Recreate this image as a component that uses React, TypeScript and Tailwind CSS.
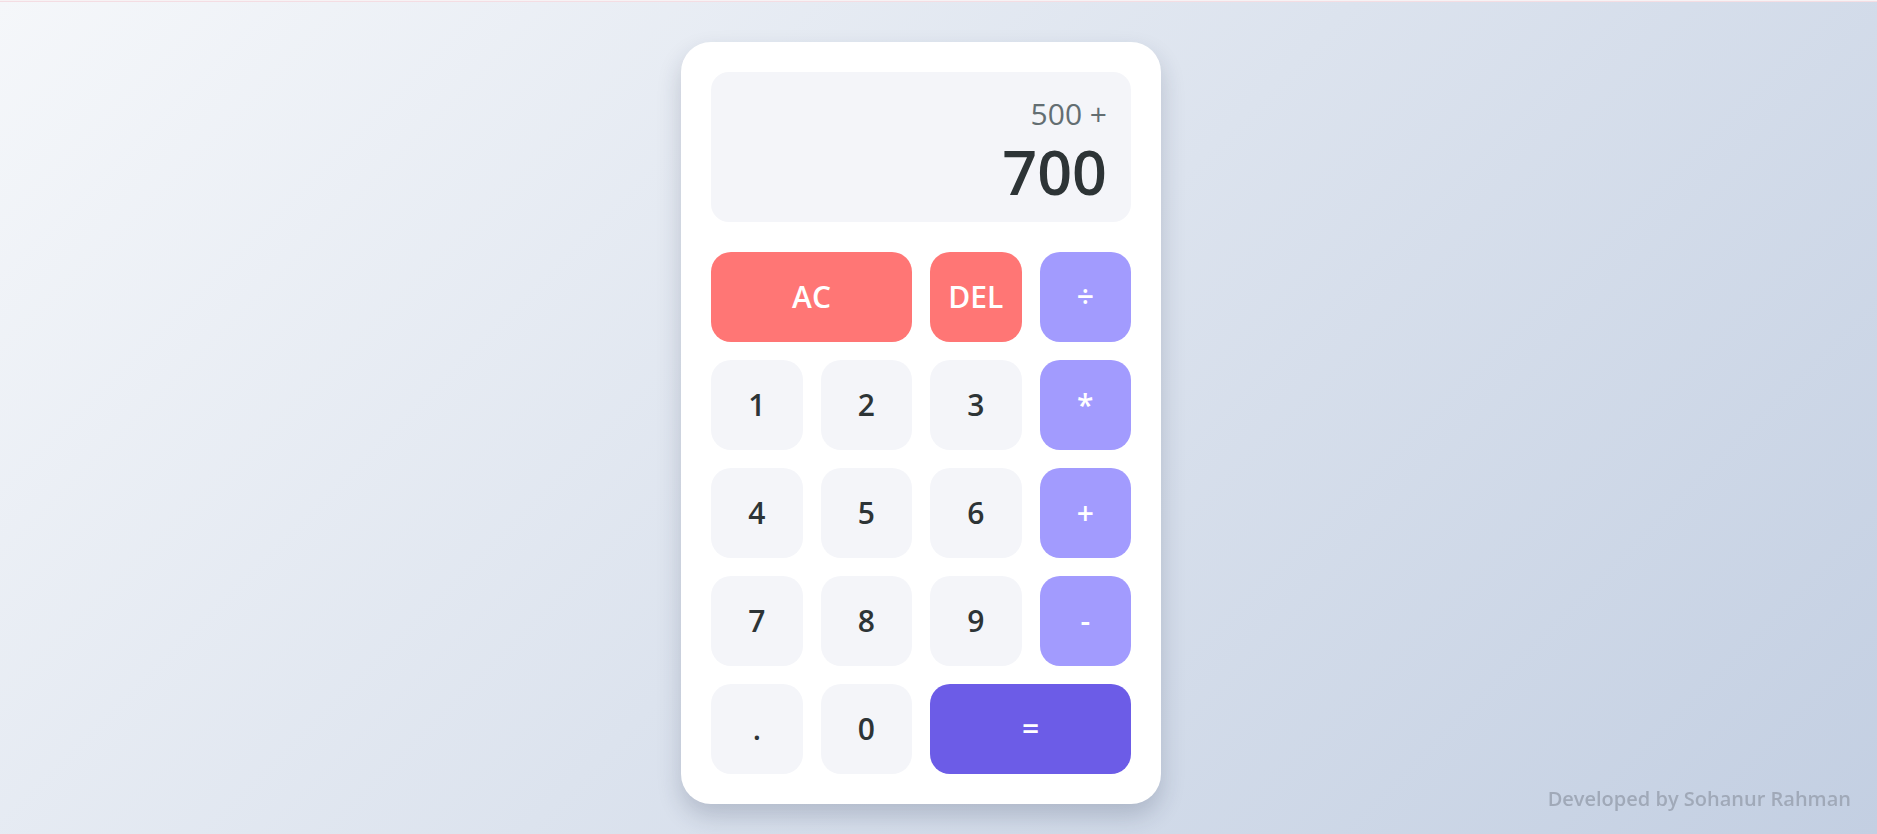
const keys = [
  { label: 'AC', kind: 'clear', wide: true },
  { label: 'DEL', kind: 'clear', wide: false },
  { label: '÷', kind: 'op', wide: false },
  { label: '1', kind: 'num', wide: false },
  { label: '2', kind: 'num', wide: false },
  { label: '3', kind: 'num', wide: false },
  { label: '*', kind: 'op', wide: false },
  { label: '4', kind: 'num', wide: false },
  { label: '5', kind: 'num', wide: false },
  { label: '6', kind: 'num', wide: false },
  { label: '+', kind: 'op', wide: false },
  { label: '7', kind: 'num', wide: false },
  { label: '8', kind: 'num', wide: false },
  { label: '9', kind: 'num', wide: false },
  { label: '-', kind: 'op', wide: false },
  { label: '.', kind: 'num', wide: false },
  { label: '0', kind: 'num', wide: false },
  { label: '=', kind: 'equals', wide: true },
];

const kindClass: Record<string, string> = {
  num: 'bg-[#f4f5f9] text-[#2d3436] font-semibold',
  clear: 'bg-[#ff7675] text-white font-semibold',
  op: 'bg-[#a29bfe] text-white font-semibold',
  equals: 'bg-[#6c5ce7] text-white font-semibold',
};

export default function App() {
  return (
    <div
      className="min-h-screen bg-[linear-gradient(135deg,#f5f7fa_0%,#c3cfe2_100%)]"
      style={{ fontFamily: '"Open Sans", "Noto Sans", sans-serif' }}
    >
      <div className="h-[2px] border-b border-[#f4dde3] bg-[#f7f2f4]" />

      <div className="flex justify-center pt-[40px] pb-[30px]">
        <div className="mr-[35px] w-[480px] rounded-[30px] bg-white p-[30px] shadow-[0_12px_24px_rgba(30,40,70,0.2)]">
          {/* Display */}
          <div className="flex h-[150px] flex-col items-end rounded-[18px] bg-[#f4f5f9] px-[24px] pt-[24px] pb-[14px]">
            <div className="text-[30px] leading-[36px] text-[#636e72]">500 +</div>
            <div className="mt-[4px] text-[61px] leading-[72px] font-semibold text-[#2d3436]">700</div>
          </div>

          {/* Keys */}
          <div className="mt-[30px] grid grid-cols-4 gap-[18px]">
            {keys.map((k) => (
              <button
                key={k.label}
                className={
                  'flex h-[90px] items-center justify-center rounded-[20px] text-[30px] leading-none ' +
                  kindClass[k.kind] +
                  (k.wide ? ' col-span-2' : '')
                }
              >
                {k.label}
              </button>
            ))}
          </div>
        </div>
      </div>

      <div className="fixed right-[26px] bottom-[21px] text-[20px] leading-[28px] font-semibold text-[#a0a9b8]">
        Developed by Sohanur Rahman
      </div>
    </div>
  );
}
